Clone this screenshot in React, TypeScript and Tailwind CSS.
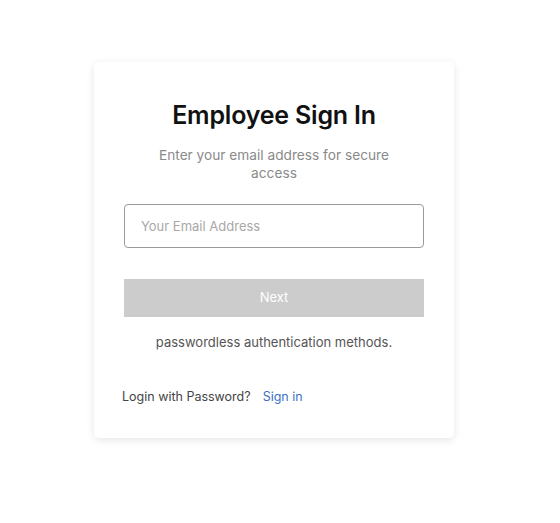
export default function App() {
  return (
    <div className="min-h-[523px] w-[560px] bg-white pt-[62px]" style={{ fontFamily: "Inter, 'Noto Sans', sans-serif" }}>
      <div className="ml-[94px] w-[360px] rounded-[5px] bg-white px-[30px] pt-[36px] pb-[32px] shadow-[0_2px_9px_rgba(0,0,0,0.1)]">
        <h1 className="text-center text-[25px] font-semibold leading-[34px] tracking-[-0.2px] text-[#111]">Employee Sign In</h1>
        <p className="mx-auto mt-[14px] w-[250px] text-center text-[13.7px] leading-[18px] text-[#8a8a8a]">
          Enter your email address for secure access
        </p>
        <input
          className="mt-[22px] block h-[44px] w-[300px] rounded-[4px] border border-[#9a9a9a] px-[16px] text-[13px] text-[#333] placeholder:text-[#a8a8a8] outline-none"
          placeholder="Your Email Address"
        />
        <button className="mt-[31px] block h-[38px] w-[300px] bg-[#cccccc] text-[13px] text-white">Next</button>
        <p className="mt-[16px] text-center text-[13px] leading-[18px] text-[#555]">passwordless authentication methods.</p>
        <div className="mt-[37px] -ml-[2px] flex text-[12.5px] leading-[18px]">
          <span className="text-[#444]">Login with Password?</span>
          <span className="ml-[12px] text-[#3b6fc4]">Sign in</span>
        </div>
      </div>
    </div>
  );
}
